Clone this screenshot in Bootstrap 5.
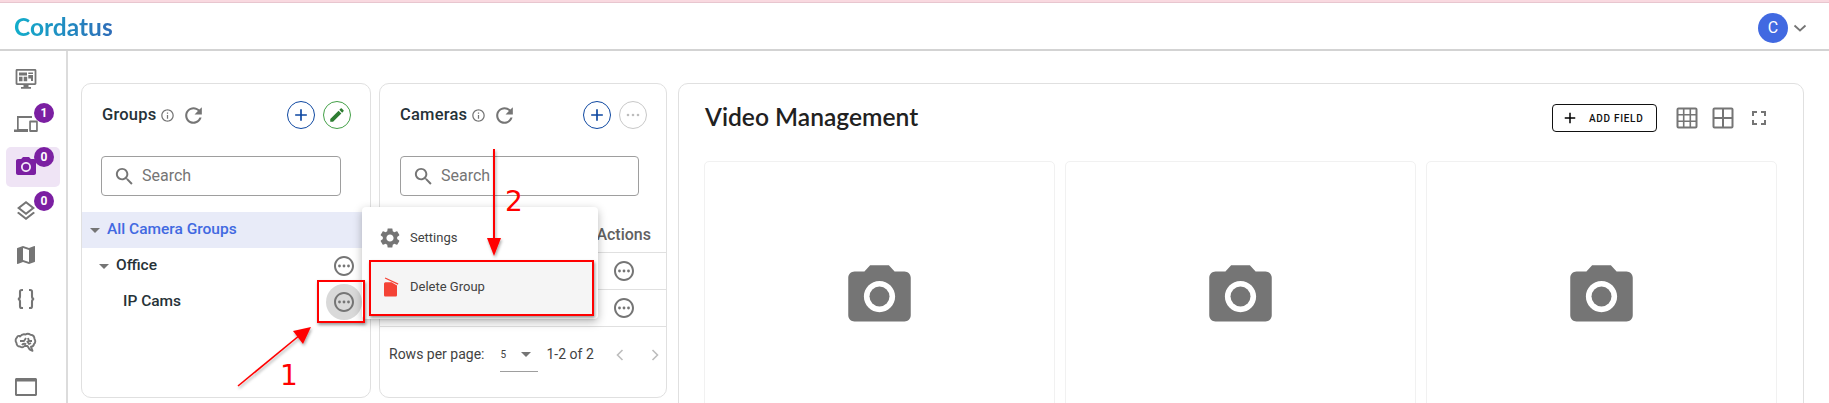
<!DOCTYPE html>
<html lang="en">
<head>
  <meta charset="UTF-8">
  <title>Cordatus - Video Management</title>
  <link href="https://cdn.jsdelivr.net/npm/bootstrap@5.3.3/dist/css/bootstrap.min.css" rel="stylesheet">
  <script src="https://cdn.jsdelivr.net/npm/bootstrap@5.3.3/dist/js/bootstrap.bundle.min.js"></script>
  <style>
    html, body { height: 403px; overflow: hidden; background: #fff; }
    body { font-family: Roboto, sans-serif; color: #212121; position: relative; }
    svg { display: block; flex: none; }
    .ico { fill: #757575; }

    .top-stripe { height: 3px; background: #f9d9e0; border-bottom: 1px solid #e8c6cf; }
    .top-bar { height: 48px; padding: 3px 0 0 14px; border-bottom: 2px solid #d3d3d3; }
    .brand-name { font: 700 24.5px/1 Lato, sans-serif; background: linear-gradient(90deg, #12aecb, #2f6cb8); -webkit-background-clip: text; background-clip: text; color: transparent; padding: 0; margin: 0; }
    .user-chip { width: 30px; height: 30px; background: #4169e1; color: #fff; font-size: 16px; }
    .user-area { padding-right: 22px; gap: 5px; }

    .page-body { height: 352px; overflow: hidden; }
    .side-rail { width: 68px; flex: none; border-right: 2px solid #dcdcdc; padding-top: 6px; }
    .rail-item { width: 54px; height: 44px; margin-left: 6px; padding-right: 14px; position: relative; flex: none; }
    .rail-item.is-active { background: #efe4f5; border-radius: 5px; height: 40px; margin-top: 2px; margin-bottom: 2px; }
    .rail-item.is-active .ico { fill: #7b1fa2; }
    .rail-count { position: absolute; left: 28px; top: 2px; width: 20px; height: 20px; background: #7b1fa2; color: #fff; font-size: 12px; font-weight: 700; line-height: 20px; text-align: center; border-radius: 50%; }
    .is-active .rail-count { top: 0; }

    .work-area { padding: 32px 25px 0 13px; gap: 8px; }
    .pane { border: 1px solid #e0e0e0; border-radius: 10px; background: #fff; }
    .pane-groups { width: 290px; height: 315px; flex: none; }
    .pane-cams { width: 288px; height: 315px; flex: none; }
    .pane-video { flex: 1 1 0; height: 360px; margin-left: 3px; }

    .pane-head { padding: 0 19px 0 20px; height: 62px; }
    .pane-title { font-size: 16.5px; font-weight: 500; color: #263238; margin: 0; letter-spacing: .2px; }
    .refresh-ico { margin-left: 6px; }
    .round-btn { width: 28px; height: 28px; padding: 0; border-radius: 50%; background: #fff; display: flex; align-items: center; justify-content: center; }
    .round-add { border: 1px solid #0d47a1; }
    .round-add svg { fill: #0d47a1; }
    .round-edit { border: 1px solid #43a047; }
    .round-edit svg { fill: #2e7d32; }
    .round-off { border: 1px solid #c8c8c8; }
    .round-off svg { fill: #bdbdbd; }

    .search-box { height: 40px; border: 1px solid #9e9e9e; border-radius: 4px; margin: 10px 0 0 19px; padding-left: 11px; gap: 6px; color: #757575; font-size: 16px; }
    .search-box span { padding-bottom: 1px; }
    .groups-search { width: 240px; }
    .cams-search { width: 239px; margin-left: 20px; }

    .tree-list { margin-top: 16px; }
    .tree-row { height: 36px; border: 0; padding: 0; background: transparent; font-size: 15.5px; font-weight: 500; color: #263238; }
    .tree-row.is-root { background: #e8ebf8; color: #4169e1; padding-left: 8px; }
    .tree-row.is-branch { padding-left: 17px; }
    .tree-row.is-leaf { padding-left: 41px; }
    .tree-caret { width: 0; height: 0; border-left: 5px solid transparent; border-right: 5px solid transparent; border-top: 5px solid #757575; margin-right: 7px; }
    .tree-more { margin-left: auto; width: 36px; height: 36px; margin-right: 8px; border-radius: 50%; display: flex; align-items: center; justify-content: center; }
    .tree-more.is-hover { background: #d9d9d9; }

    .cam-table { margin: 20px 0 0; }
    .cam-head { height: 37px; border-bottom: 1px solid #e0e0e0; font-size: 16px; font-weight: 500; color: #616161; padding-right: 15px; padding-top: 1px; }
    .cam-row { height: 37px; border-bottom: 1px solid #e0e0e0; padding-right: 30px; }
    .pager { font-size: 14px; color: #424242; padding: 10px 0 0 9px; }
    .page-size { width: 38px; margin-left: 16px; margin-right: 8px; height: 35px; border-bottom: 1px solid #9e9e9e; font-size: 10px; }
    .page-caret { width: 0; height: 0; border-left: 5px solid transparent; border-right: 5px solid transparent; border-top: 5px solid #757575; margin-left: auto; margin-right: 7px; }
    .pager-next { margin-left: 21px; margin-right: 4px; }

    .video-head { padding: 0 32px 0 26px; height: 68px; margin-bottom: 9px; }
    .video-title { font: 600 24.6px/1 Lato, sans-serif; color: #212121; margin: 0; padding-bottom: 2px; }
    .add-field { width: 105px; height: 28px; padding: 0 0 0 8px; border: 1px solid #111; border-radius: 4px; font-size: 10px; font-weight: 500; letter-spacing: .7px; color: #111; gap: 10px; }
    .view-tools { gap: 12px; margin-left: 18px; }
    .video-grid { padding: 0 26px 0 25px; gap: 10px; }
    .video-slot { flex: 1 1 0; height: 300px; border: 1px solid #f1f1f1; border-radius: 5px; padding-bottom: 30px; }

    .ctx-menu { position: absolute; left: 362px; top: 207px; width: 236px; height: 112px; padding: 0; margin: 0; border: 0; border-radius: 4px; box-shadow: 0 3px 10px rgba(0,0,0,.28); z-index: 5; }
    .ctx-item { height: 55px; padding: 7px 0 0 16px; gap: 8px; font-size: 13px; color: #424242; }
    .ctx-item.is-on { height: 53px; width: auto; margin: 0 5px 0 7px; padding: 0 0 3px 9px; gap: 8px; background: #f5f5f5; }

    .mark-box { position: absolute; border: 2px solid #f00; box-shadow: 1px 2px 3px rgba(0,0,0,.4); z-index: 6; }
    .mark-one { left: 317px; top: 280px; width: 48px; height: 43px; }
    .mark-two { left: 369px; top: 260px; width: 225px; height: 56px; }
    .mark-layer { position: absolute; left: 0; top: 0; z-index: 7; pointer-events: none; }
    .mark-num { font: 28px "DejaVu Sans", sans-serif; fill: #f00; }
  </style>
</head>
<body>
  <svg width="0" height="0" class="position-absolute">
    <defs>
      <symbol id="i-add" viewBox="0 0 24 24"><path d="M19 13h-6v6h-2v-6H5v-2h6V5h2v6h6v2z"/></symbol>
      <symbol id="i-edit" viewBox="0 0 24 24"><path d="M3 17.25V21h3.75L17.81 9.94l-3.75-3.75L3 17.25zM20.71 7.04c.39-.39.39-1.02 0-1.41l-2.34-2.34c-.39-.39-1.02-.39-1.41 0l-1.83 1.83 3.75 3.75 1.83-1.83z"/></symbol>
      <symbol id="i-info" viewBox="0 0 24 24"><path d="M11 7h2v2h-2zm0 4h2v6h-2zm1-9C6.48 2 2 6.48 2 12s4.48 10 10 10 10-4.48 10-10S17.52 2 12 2zm0 18c-4.41 0-8-3.59-8-8s3.59-8 8-8 8 3.59 8 8-3.59 8-8 8z"/></symbol>
      <symbol id="i-refresh" viewBox="0 0 24 24"><path d="M17.65 6.35C16.2 4.9 14.21 4 12 4c-4.42 0-7.99 3.58-7.99 8s3.57 8 7.99 8c3.73 0 6.84-2.55 7.73-6h-2.08c-.82 2.33-3.04 4-5.65 4-3.31 0-6-2.69-6-6s2.69-6 6-6c1.66 0 3.14.69 4.22 1.78L13 11h7V4l-2.35 2.35z"/></symbol>
      <symbol id="i-search" viewBox="0 0 24 24"><path d="M15.5 14h-.79l-.28-.27C15.41 12.59 16 11.11 16 9.5 16 5.91 13.09 3 9.5 3S3 5.91 3 9.5 5.91 16 9.5 16c1.61 0 3.09-.59 4.23-1.57l.27.28v.79l5 4.99L20.49 19l-4.99-5zm-6 0C7.01 14 5 11.99 5 9.5S7.01 5 9.5 5 14 7.01 14 9.5 11.99 14 9.5 14z"/></symbol>
      <symbol id="i-more" viewBox="0 0 24 24"><path d="M12 2C6.48 2 2 6.48 2 12s4.48 10 10 10 10-4.48 10-10S17.52 2 12 2zm0 18c-4.41 0-8-3.59-8-8s3.59-8 8-8 8 3.59 8 8-3.59 8-8 8z"/><circle cx="7.5" cy="12" r="1.4"/><circle cx="12" cy="12" r="1.4"/><circle cx="16.5" cy="12" r="1.4"/></symbol>
      <symbol id="i-camera" viewBox="0 0 24 24"><circle cx="12" cy="12" r="3.2"/><path d="M9 2L7.17 4H4c-1.1 0-2 .9-2 2v12c0 1.1.9 2 2 2h16c1.1 0 2-.9 2-2V6c0-1.1-.9-2-2-2h-3.17L15 2H9zm3 15c-2.76 0-5-2.24-5-5s2.24-5 5-5 5 2.24 5 5-2.24 5-5 5z"/></symbol>
    </defs>
  </svg>

  <div class="top-stripe"></div>
  <nav class="navbar top-bar d-flex justify-content-between align-items-center flex-nowrap">
    <a class="navbar-brand brand-name" href="#">Cordatus</a>
    <div class="d-flex align-items-center user-area">
      <div class="user-chip rounded-circle d-flex align-items-center justify-content-center">C</div>
      <svg width="14" height="14" viewBox="0 0 14 14" fill="none" stroke="#757575" stroke-width="1.8"><path d="M1.5 4.5 7 9.5l5.500-5"/></svg>
    </div>
  </nav>

  <div class="d-flex page-body">
    <aside class="side-rail d-flex flex-column">
      <div class="rail-item d-flex align-items-center justify-content-center">
        <svg class="ico" width="24" height="24" viewBox="0 0 24 24"><path d="M3 2h18c.8 0 1.4.6 1.4 1.4v13.2c0 .8-.6 1.4-1.4 1.4h-6.5v2H17v1.8H7V20h2.5v-2H3c-.8 0-1.4-.6-1.4-1.4V3.4C1.600 2.600 2.200 2 3 2zm.4 1.800v12.400h17.200V3.800H3.400z"/><path d="M5 5.500h8v3H5zM14.300 5.500H19v1.500h-4.700zM14.300 8h4.700v6h-2v-2.500h-2.700zM5 9.700h3.500v4.500H5zM9.700 9.700h3.500v4.500H9.700z"/></svg>
      </div>
      <div class="rail-item d-flex align-items-center justify-content-center">
        <svg class="ico" width="24" height="24" viewBox="0 0 24 24"><path d="M3 5h15v2H4.700v11H14v3H0v-2.500h3zM16.500 9.500h6c.8 0 1.300.5 1.300 1.300v9c0 .8-.5 1.300-1.300 1.300h-6c-.8 0-1.300-.5-1.300-1.300v-9c0-.8.5-1.300 1.300-1.300zm.4 2v7.500h5.200v-7.500z"/></svg>
        <span class="rail-count">1</span>
      </div>
      <div class="rail-item is-active d-flex align-items-center justify-content-center">
        <svg class="ico" width="24" height="24" viewBox="0 0 24 24"><use href="#i-camera"/></svg>
        <span class="rail-count">0</span>
      </div>
      <div class="rail-item d-flex align-items-center justify-content-center">
        <svg class="ico" width="24" height="24" viewBox="0 0 24 24"><path d="M11.990 18.540l-7.370-5.730L3 14.070l9 7 9-7-1.630-1.270-7.380 5.740zM12 16l7.360-5.730L21 9l-9-7-9 7 1.630 1.270L12 16zm0-11.470L17.740 9 12 13.470 6.260 9 12 4.530z"/></svg>
        <span class="rail-count">0</span>
      </div>
      <div class="rail-item d-flex align-items-center justify-content-center">
        <svg class="ico" width="24" height="24" viewBox="0 0 24 24"><path d="M20.500 3l-.16.03L15 5.100 9 3 3.360 4.900c-.21.07-.36.25-.36.48V20.500c0 .28.22.5.5.5l.16-.03L9 18.900l6 2.100 5.640-1.900c.21-.07.36-.25.36-.48V3.500c0-.28-.22-.5-.5-.5zM15 19l-6-2.110V5l6 2.110V19z"/></svg>
      </div>
      <div class="rail-item d-flex align-items-center justify-content-center">
        <svg width="24" height="24" viewBox="0 0 24 24" fill="none" stroke="#757575" stroke-width="2.100"><path d="M9 3H7.800C6.700 3 6 3.700 6 4.800v4.700c0 1.400-.8 2.300-2 2.500 1.200.2 2 1.100 2 2.500v4.700c0 1.100.7 1.800 1.800 1.800H9M15 3h1.200C17.300 3 18 3.700 18 4.800v4.700c0 1.400.8 2.300 2 2.500-1.200.2-2 1.100-2 2.500v4.700c0 1.100-.7 1.800-1.800 1.800H15"/></svg>
      </div>
      <div class="rail-item d-flex align-items-center justify-content-center">
        <svg width="24" height="24" viewBox="0 0 24 24" fill="none" stroke="#757575" stroke-width="1.900" stroke-linejoin="round"><path d="M6 5.500c1.500-2 4-2.500 5.500-2 1.500-1 3.500-.8 5 .2 2.500.3 4 2.200 4 4.300 1.200 1.500 1 3.800-.5 5-.3 1.700-1.500 2.700-3 2.800l1.500 4-3-1.500-2-3.300h-3c-1 1.200-3 1.500-4.500.5-2 0-3.500-1.500-3.500-3.500-1.500-2-1-4.500.5-5.500 0-1 1-2 2.500-1.500z"/><path d="M6 10h4l2-3M8 14c1-1.500 3-1.500 4-.5M14 7l1 3h3M13 10l2 3 2-1"/></svg>
      </div>
      <div class="rail-item d-flex align-items-center justify-content-center">
        <svg class="ico" width="24" height="24" viewBox="0 0 24 24"><path d="M2.500 3h19c.8 0 1.500.7 1.500 1.500v15c0 .8-.7 1.500-1.500 1.500h-19C1.700 21 1 20.300 1 19.500v-15C1 3.700 1.700 3 2.500 3zm.4 3.500v12.600h18.200V6.500z"/></svg>
      </div>
    </aside>

    <main class="d-flex flex-grow-1 work-area">
      <section class="pane pane-groups">
        <div class="pane-head d-flex align-items-center">
          <h6 class="pane-title">Groups</h6>
          <svg class="ico ms-1" width="15" height="15"><use href="#i-info"/></svg>
          <svg class="ico refresh-ico" width="25" height="25"><use href="#i-refresh"/></svg>
          <button class="round-btn round-add ms-auto" type="button"><svg width="20" height="20"><use href="#i-add"/></svg></button>
          <button class="round-btn round-edit ms-2" type="button"><svg width="18" height="18"><use href="#i-edit"/></svg></button>
        </div>
        <div class="search-box groups-search d-flex align-items-center">
          <svg class="ico" width="23" height="23"><use href="#i-search"/></svg><span>Search</span>
        </div>
        <ul class="list-group tree-list rounded-0">
          <li class="list-group-item tree-row is-root d-flex align-items-center"><span class="tree-caret"></span>All Camera Groups</li>
          <li class="list-group-item tree-row is-branch d-flex align-items-center"><span class="tree-caret"></span>Office<span class="tree-more"><svg class="ico" width="24" height="24"><use href="#i-more"/></svg></span></li>
          <li class="list-group-item tree-row is-leaf d-flex align-items-center">IP Cams<span class="tree-more is-hover"><svg class="ico" width="24" height="24"><use href="#i-more"/></svg></span></li>
        </ul>
      </section>

      <section class="pane pane-cams">
        <div class="pane-head d-flex align-items-center">
          <h6 class="pane-title">Cameras</h6>
          <svg class="ico ms-1" width="15" height="15"><use href="#i-info"/></svg>
          <svg class="ico refresh-ico" width="25" height="25"><use href="#i-refresh"/></svg>
          <button class="round-btn round-add ms-auto" type="button"><svg width="20" height="20"><use href="#i-add"/></svg></button>
          <button class="round-btn round-off ms-2" type="button"><svg width="18" height="18"><circle cx="4" cy="9" r="1.300"/><circle cx="9" cy="9" r="1.300"/><circle cx="14" cy="9" r="1.300"/></svg></button>
        </div>
        <div class="search-box cams-search d-flex align-items-center">
          <svg class="ico" width="23" height="23"><use href="#i-search"/></svg><span>Search</span>
        </div>
        <div class="cam-table">
          <div class="cam-head d-flex align-items-center justify-content-end">Actions</div>
          <div class="cam-row d-flex align-items-center justify-content-end"><svg class="ico" width="24" height="24"><use href="#i-more"/></svg></div>
          <div class="cam-row d-flex align-items-center justify-content-end"><svg class="ico" width="24" height="24"><use href="#i-more"/></svg></div>
        </div>
        <div class="pager d-flex align-items-center">
          <span>Rows per page:</span>
          <span class="page-size d-flex align-items-center">5<span class="page-caret"></span></span>
          <span>1-2 of 2</span>
          <svg class="ms-auto" width="14" height="14" viewBox="0 0 14 14" fill="none" stroke="#bdbdbd" stroke-width="1.600"><path d="M9.500 2 4.500 7l5 5"/></svg>
          <svg class="pager-next" width="14" height="14" viewBox="0 0 14 14" fill="none" stroke="#bdbdbd" stroke-width="1.600"><path d="M4.500 2l5 5-5 5"/></svg>
        </div>
      </section>

      <section class="pane pane-video">
        <div class="video-head d-flex align-items-center">
          <h4 class="video-title">Video Management</h4>
          <button class="btn add-field d-flex align-items-center ms-auto" type="button"><svg width="18" height="18"><use href="#i-add"/></svg>ADD FIELD</button>
          <div class="d-flex align-items-center view-tools">
            <svg width="24" height="24" viewBox="0 0 24 24" fill="none" stroke="#757575" stroke-width="1.600"><rect x="2.500" y="2.500" width="19" height="19" rx="1" stroke-width="2"/><path d="M8.700 3v18M15.300 3v18M3 8.700h18M3 15.300h18"/></svg>
            <svg width="24" height="24" viewBox="0 0 24 24" fill="none" stroke="#757575" stroke-width="2"><rect x="2.500" y="2.500" width="19" height="19" rx="1"/><path d="M12 3v18M3 12h18"/></svg>
            <svg class="ico" width="24" height="24" viewBox="0 0 24 24"><path d="M7 14H5v5h5v-2H7v-3zm-2-4h2V7h3V5H5v5zm12 7h-3v2h5v-5h-2v3zM14 5v2h3v3h2V5h-5z"/></svg>
          </div>
        </div>
        <div class="d-flex video-grid">
          <div class="video-slot d-flex align-items-center justify-content-center"><svg class="ico" width="75" height="75"><use href="#i-camera"/></svg></div>
          <div class="video-slot d-flex align-items-center justify-content-center"><svg class="ico" width="75" height="75"><use href="#i-camera"/></svg></div>
          <div class="video-slot d-flex align-items-center justify-content-center"><svg class="ico" width="75" height="75"><use href="#i-camera"/></svg></div>
        </div>
      </section>
    </main>
  </div>

  <!-- opened group menu -->
  <div class="dropdown-menu show ctx-menu">
    <a class="dropdown-item ctx-item d-flex align-items-center" href="#"><svg class="ico" width="24" height="24" viewBox="0 0 24 24"><path d="M19.140 12.940c.04-.3.06-.61.06-.94 0-.32-.02-.64-.07-.94l2.030-1.580c.18-.14.23-.41.12-.61l-1.920-3.320c-.12-.22-.37-.29-.59-.22l-2.390.96c-.5-.38-1.030-.7-1.620-.94l-.36-2.540c-.04-.24-.24-.41-.48-.41h-3.840c-.24 0-.43.17-.47.41l-.36 2.540c-.59.24-1.130.57-1.620.94l-2.390-.96c-.22-.08-.47 0-.59.22L2.740 8.870c-.12.21-.08.47.12.61l2.030 1.580c-.05.3-.09.63-.09.94s.02.64.07.94l-2.030 1.580c-.18.14-.23.41-.12.61l1.920 3.320c.12.22.37.29.59.22l2.390-.96c.5.38 1.030.7 1.620.94l.36 2.540c.05.24.24.41.48.41h3.840c.24 0 .44-.17.47-.41l.36-2.540c.59-.24 1.130-.56 1.620-.94l2.390.96c.22.08.47 0 .59-.22l1.920-3.320c.12-.22.07-.47-.12-.61l-2.010-1.580zM12 15.600c-1.980 0-3.600-1.620-3.600-3.600s1.620-3.600 3.600-3.600 3.600 1.620 3.600 3.600-1.620 3.600-3.600 3.600z"/></svg>Settings</a>
    <a class="dropdown-item ctx-item is-on d-flex align-items-center" href="#"><svg width="24" height="24" viewBox="0 0 24 24" fill="#f44336"><path d="M6 9c0-1 .6-1.800 1.500-1.800h6L19 10.500V20c0 1-.6 1.500-1.500 1.500h-10C6.600 21.500 6 21 6 20z"/><path d="M7.300 2.500 20.400 8.600l-.5 1.100L6.800 3.600z"/></svg>Delete Group</a>
  </div>

  <div class="mark-box mark-one"></div>
  <div class="mark-box mark-two"></div>
  <svg class="mark-layer" width="1829" height="403" viewBox="0 0 1829 403">
    <defs><filter id="soft" x="-20%" y="-20%" width="140%" height="140%"><feDropShadow dx="1" dy="2" stdDeviation="1.500" flood-opacity=".35"/></filter></defs>
    <g filter="url(#soft)">
      <path d="M238 386 300 335" stroke="#f00" stroke-width="1.600" fill="none"/>
      <path d="M311 327 293 331 303 344z" fill="#f00"/>
      <path d="M494 149V245" stroke="#f00" stroke-width="2" fill="none"/>
      <path d="M487 238H501L494 256z" fill="#f00"/>
    </g>
    <text class="mark-num" x="280" y="385">1</text>
    <text class="mark-num" x="505" y="211">2</text>
  </svg>
</body>
</html>
